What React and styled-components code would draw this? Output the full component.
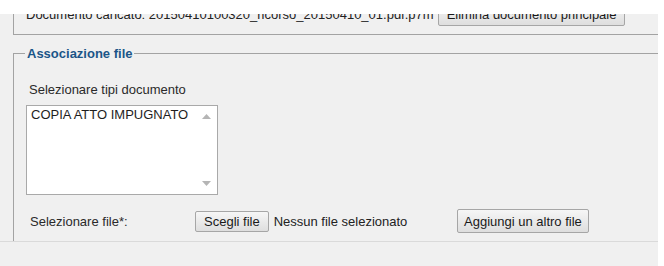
import React from 'react';
import styled, { createGlobalStyle } from 'styled-components';

const GlobalStyle = createGlobalStyle`
	body {
		margin: 0;
		background: #ffffff;
		font-family: 'Liberation Sans', Arial, sans-serif;
		font-size: 13px;
		color: #222;
	}
`;

const Screen = styled.div`
	width: 658px;
	height: 266px;
	display: flex;
	flex-direction: column;
	background: #f0f0f0;
`;

const TopBand = styled.div`
	height: 14px;
	flex: 0 0 14px;
	background: #ffffff;
`;

const Viewport = styled.div`
	height: 227px;
	flex: 0 0 227px;
	overflow: hidden;
`;

const Footer = styled.div`
	flex: 1;
	border-top: 1px solid #dadada;
	background: #f0f0f0;
`;

const Fieldset = styled.fieldset`
	margin: ${(p) => (p.first ? '-19px -20px 0 13px' : '11px -20px 0 13px')};
	padding: ${(p) => (p.first ? '6px 12px 8px 12px' : '21px 12px 10px 12px')};
	border: 1px solid #a3a3a3;
	min-width: 0;
`;

const Legend = styled.legend`
	margin-left: -1px;
	padding: 0 2px;
	font-weight: bold;
	font-size: 13px;
	line-height: 15px;
	color: #1b5688;
`;

const Row = styled.div`
	display: flex;
	align-items: center;
	height: 24px;
	margin-top: ${(p) => p.top || 0}px;
`;

const UploadedText = styled.span`
	flex: none;
	white-space: nowrap;
	margin-right: 4px;
	color: #222;
`;

const Label = styled.div`
	padding-left: ${(p) => p.indent || 4}px;
	line-height: 15px;
	color: #2a2a2a;
	flex: ${(p) => (p.cell ? `0 0 ${p.cell}px` : 'none')};
	box-sizing: border-box;
`;

const Listbox = styled.div`
	margin-top: 8px;
	width: 192px;
	height: 90px;
	box-sizing: border-box;
	border: 1px solid #a9a9a9;
	background: #ffffff;
	display: flex;
`;

const Options = styled.div`
	flex: 1;
	padding: 1px 4px;
`;

const Option = styled.div`
	line-height: 15px;
	color: #1e1e1e;
	white-space: nowrap;
`;

const Scrollbar = styled.div`
	flex: 0 0 19px;
	display: flex;
	flex-direction: column;
	justify-content: space-between;
	align-items: center;
	padding: 8px 2px 8px 0;
	box-sizing: border-box;
`;

const Button = styled.button`
	font-family: 'Liberation Sans', Arial, sans-serif;
	font-size: 13px;
	color: #1a1a1a;
	height: ${(p) => p.h || 24}px;
	padding: 0 ${(p) => p.pad || 6}px;
	border: 1px solid #a6a6a6;
	border-radius: 2px;
	background: linear-gradient(#f6f6f6, #dedede);
	box-sizing: border-box;
	white-space: nowrap;
	line-height: 1;
`;

const FilePicker = styled.div`
	flex: 0 0 262px;
	display: flex;
	align-items: center;
	gap: 5px;
`;

const PickerText = styled.span`
	color: #222;
	white-space: nowrap;
`;

const Arrow = ({ down }) => (
	<svg width="9" height="5" viewBox="0 0 9 5">
		<polygon
			points={down ? '0,0 9,0 4.5,5' : '0,5 9,5 4.5,0'}
			fill="#b5b5b5"
		/>
	</svg>
);

const App = () => {
	return (
		<>
			<GlobalStyle />
			<Screen>
				<TopBand />
				<Viewport>
					<Fieldset first>
						<Row>
							<UploadedText>
								Documento caricato: 20150410100320_ricorso_20150410_01.pdf.p7m
							</UploadedText>
							<Button pad={8}>Elimina documento principale</Button>
						</Row>
					</Fieldset>
					<Fieldset>
						<Legend>Associazione file</Legend>
						<Label indent={3}>Selezionare tipi documento</Label>
						<Listbox>
							<Options>
								<Option>COPIA ATTO IMPUGNATO</Option>
							</Options>
							<Scrollbar>
								<Arrow />
								<Arrow down />
							</Scrollbar>
						</Listbox>
						<Row top={14}>
							<Label cell={169}>Selezionare file*:</Label>
							<FilePicker>
								<Button h={21} pad={8}>Scegli file</Button>
								<PickerText>Nessun file selezionato</PickerText>
							</FilePicker>
							<Button h={24} pad={6}>Aggiungi un altro file</Button>
						</Row>
					</Fieldset>
				</Viewport>
				<Footer />
			</Screen>
		</>
	);
};

export default App;
